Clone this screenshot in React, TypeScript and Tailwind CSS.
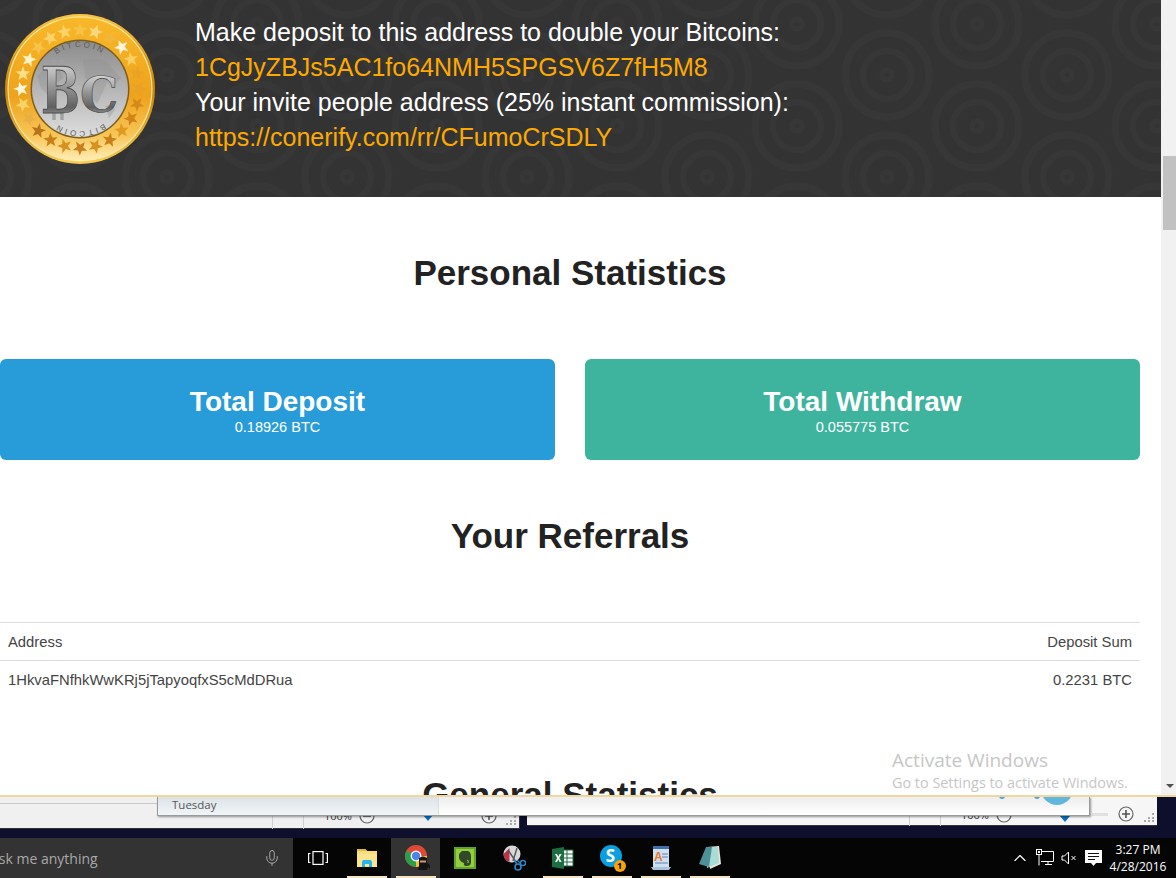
import React from 'react';
import { ChevronUp, Mic } from 'lucide-react';

// star path centred on 0,0
const starPoints = (r: number) => {
  const pts: string[] = [];
  for (let i = 0; i < 10; i++) {
    const rad = i % 2 === 0 ? r : r * 0.42;
    const a = (Math.PI / 5) * i - Math.PI / 2;
    pts.push(`${(Math.cos(a) * rad).toFixed(2)},${(Math.sin(a) * rad).toFixed(2)}`);
  }
  return pts.join(' ');
};

const starColors = [
  '#fbe08a', '#fff3c4', '#f6c24a', '#fbd36a', '#fbd36a', '#f6c24a', '#f9d880', '#f4b63a',
  '#fff6d8', '#f9cf62', '#eaa324', '#e8a026', '#d68a1a', '#d08418', '#e09a22', '#c9801a',
  '#d8921f', '#c9801a', '#d8921f', '#c9801a', '#b8721a', '#e8b040', '#f8d468', '#fff6dc',
];

const Coin = () => {
  const stars = starColors.map((fill, i) => {
    // first star sits just right of the left-most white one, going clockwise
    const a = (i / 24) * Math.PI * 2 + Math.PI + 0.26;
    return { x: 75 + Math.cos(a) * 59, y: 75 + Math.sin(a) * 59, rot: (i * 360) / 24, fill };
  });
  return (
    <svg width="150" height="150" viewBox="0 0 150 150" className="shrink-0">
      <defs>
        <linearGradient id="rim" x1="0" y1="0" x2="0" y2="1">
          <stop offset="0" stopColor="#f9c443" />
          <stop offset="0.5" stopColor="#c98408" />
          <stop offset="1" stopColor="#f9cc55" />
        </linearGradient>
        <linearGradient id="gold" x1="0" y1="0" x2="0" y2="1">
          <stop offset="0" stopColor="#f8b82a" />
          <stop offset="0.55" stopColor="#eea31c" />
          <stop offset="0.82" stopColor="#f7c557" />
          <stop offset="1" stopColor="#ffedb5" />
        </linearGradient>
        <linearGradient id="silver" x1="0" y1="0" x2="0" y2="1">
          <stop offset="0" stopColor="#8b8b8b" />
          <stop offset="0.5" stopColor="#b5b5b5" />
          <stop offset="1" stopColor="#dedede" />
        </linearGradient>
        <linearGradient id="letter" x1="0" y1="0" x2="0" y2="1">
          <stop offset="0" stopColor="#f0f0f0" />
          <stop offset="0.4" stopColor="#a0a0a0" />
          <stop offset="0.72" stopColor="#606060" />
          <stop offset="1" stopColor="#cfcfcf" />
        </linearGradient>
        <path id="arcTop" d="M 33 75 A 42 42 0 0 1 117 75" />
      </defs>
      <circle cx="75" cy="75" r="75" fill="url(#rim)" />
      <circle cx="75" cy="75" r="72.5" fill="#fff0b0" />
      <circle cx="75" cy="75" r="71.5" fill="url(#gold)" />
      {stars.map((s, i) => (
        <polygon key={i} points={starPoints(7.6)} fill={s.fill} transform={`translate(${s.x.toFixed(1)} ${s.y.toFixed(1)}) rotate(${s.rot})`} />
      ))}
      <circle cx="75" cy="75" r="49.5" fill="#7c5f1e" />
      <circle cx="75" cy="75" r="48" fill="url(#silver)" />
      <path d="M32 62q10-10 22-6l4 8-8 6 2 10-8 2-8-8zM78 46q14-4 24 2l14 16-6 6-8-2-4 10-6 12-6-8 2-12-8-6zM100 92l8-2 2 6-6 8z" fill="#8e8e8e" opacity="0.35" />
      <text fill="#5e5e5e" fontFamily="'Liberation Sans', sans-serif" fontSize="8" letterSpacing="2.6">
        <textPath href="#arcTop" startOffset="50%" textAnchor="middle">BITCOIN</textPath>
      </text>
      <text fill="#5e5e5e" fontFamily="'Liberation Sans', sans-serif" fontSize="8" letterSpacing="2.6" transform="rotate(180 75 75)">
        <textPath href="#arcTop" startOffset="50%" textAnchor="middle">BITCOIN</textPath>
      </text>
      <path d="M49 46v10M57 46v10M49 96v10M57 96v10" stroke="#a0a0a0" strokeWidth="3.4" />
      <text x="36" y="71" transform="scale(1 1.4)" fill="url(#letter)" stroke="#4a4a4a" strokeWidth="0.6" fontFamily="'DejaVu Serif', serif" fontWeight="700" fontSize="46">B</text>
      <text x="75" y="98" fill="url(#letter)" stroke="#4a4a4a" strokeWidth="0.6" fontFamily="'DejaVu Serif', serif" fontWeight="700" fontSize="48">C</text>
    </svg>
  );
};

const HeaderPattern = () => {
  const centers = [[167, 75], [-13, 75], [167, -27], [-13, -27], [77, 24], [77, 126]];
  return (
    <svg className="absolute inset-0 w-full h-full">
      <defs>
        <pattern id="rings" patternUnits="userSpaceOnUse" width="180" height="102">
          {centers.map(([cx, cy], i) => (
            <g key={i} fill="none" stroke="#373737">
              <circle cx={cx} cy={cy} r="42" strokeWidth="7" />
              <circle cx={cx} cy={cy} r="24" strokeWidth="6" />
              <circle cx={cx} cy={cy} r="5" strokeWidth="5" />
            </g>
          ))}
        </pattern>
      </defs>
      <rect width="100%" height="100%" fill="url(#rings)" />
    </svg>
  );
};

const StatCard = ({ title, value, color }: { title: string; value: string; color: string }) => (
  <div className={`flex-1 h-[101px] rounded-[6px] text-white flex flex-col items-center pt-[27px] ${color}`}>
    <div className="text-[28px] leading-[32px] font-bold">{title}</div>
    <div className="text-[14.5px] leading-[20px] -mt-[1px]">{value}</div>
  </div>
);

const SectionTitle = ({ children, top }: { children: React.ReactNode; top: string }) => (
  <h2 className={`h-10 leading-10 text-[35px] font-bold text-center text-[#222] ${top}`}>{children}</h2>
);

const TableRow = ({ left, right }: { left: string; right: string }) => (
  <div className="h-[38px] border-t border-[#dddddd] flex items-center justify-between px-2 pt-[1px] text-[14.8px] text-[#444]">
    <span>{left}</span>
    <span>{right}</span>
  </div>
);

const ZoomCircle = ({ plus }: { plus?: boolean }) => (
  <svg width="16" height="16" viewBox="0 0 16 16">
    <circle cx="8" cy="8" r="7" fill="none" stroke="#666" strokeWidth="1.2" />
    <path d={plus ? 'M4 8h8M8 4v8' : 'M4 8h8'} stroke="#555" strokeWidth="1.6" />
  </svg>
);

const Grip = () => (
  <svg width="10" height="10" viewBox="0 0 10 10" className="absolute right-[3px] bottom-[3px]">
    <path d="M8 1h2v2H8zM4 5h2v2H4zM8 5h2v2H8zM0 8h2v2H0zM4 8h2v2H4zM8 8h2v2H8z" fill="#aaa" />
  </svg>
);

const Slot = ({ active, running, children }: { active?: boolean; running?: boolean; children: React.ReactNode }) => (
  <div className={`relative w-[49px] h-full flex items-center justify-center ${active ? 'bg-[#333333]' : ''}`}>
    {children}
    {running && <div className="absolute left-[5px] right-[4px] bottom-0 h-[2px] bg-[#f3e3c3]" />}
  </div>
);

const FolderIcon = () => (
  <svg width="24" height="24" viewBox="0 0 24 24">
    <path d="M2 3h8l2 2h10v16H2z" fill="#f7dc7e" />
    <path d="M2 3h8l2 2H2z" fill="#e3b93e" />
    <path d="M2 8h20v13H2z" fill="#fbe48e" />
    <path d="M7 21v-5l1-2h8l1 2v5h-3v-3h-4v3z" fill="#27b5ee" />
  </svg>
);

const ChromeIcon = () => (
  <svg width="28" height="28" viewBox="0 0 28 28" className="ml-[4px]">
    <circle cx="12" cy="12" r="11" fill="#e04a35" />
    <path d="M12 12 2.5 6.5A11 11 0 0 0 12 23z" fill="#2f9e4a" />
    <path d="M12 12h11a11 11 0 0 1-11 11z" fill="#f7c62f" />
    <circle cx="12" cy="12" r="5.4" fill="#fff" />
    <circle cx="12" cy="12" r="4.2" fill="#4a86e8" />
    <path d="M15 14q4-3 8 0v5l3 2v4l-2-2-1 3H14l1-4z" fill="#141414" />
    <path d="M16 16.5h6v2h-6z" fill="#d89a70" />
  </svg>
);

const EvernoteIcon = () => (
  <svg width="22" height="22" viewBox="0 0 22 22">
    <rect width="22" height="22" fill="#5fa327" />
    <rect x="2" y="2" width="18" height="18" fill="#93cf3c" />
    <path d="M5 7l3-3h6q3 1 3 6v5q0 4-4 4h-2q-2-1-1-3-4-1-5-5V8z" fill="#33472a" />
    <path d="M13 13q2 0 1 3" stroke="#93cf3c" strokeWidth="1" fill="none" />
  </svg>
);

const SnipIcon = () => (
  <svg width="24" height="26" viewBox="0 0 24 26">
    <circle cx="10" cy="9" r="8.5" fill="#d8d8dc" />
    <path d="M1.5 9a8.5 8.5 0 0 0 6 8V3z" fill="#b8344a" />
    <path d="M6 5l8 12M15 3l-4 13" stroke="#555" strokeWidth="1.4" />
    <circle cx="16" cy="22" r="3" fill="none" stroke="#2f86c8" strokeWidth="1.6" />
    <circle cx="21" cy="18" r="2.6" fill="none" stroke="#2f86c8" strokeWidth="1.5" />
    <path d="M12 15l3 4M18 18l-3-3" stroke="#2f86c8" strokeWidth="1.4" />
  </svg>
);

const ExcelIcon = () => (
  <svg width="24" height="24" viewBox="0 0 24 24">
    <path d="M11 4h11v16H11z" fill="#fff" stroke="#1d6f42" strokeWidth="1" />
    <path d="M11 8h11M11 12h11M11 16h11M16 4v16" stroke="#1d6f42" strokeWidth="1" />
    <path d="M1 3l12-2v22L1 21z" fill="#1d6f42" />
    <path d="M4 8l2.2 4L4 16h2l1.3-2.7L8.6 16h2l-2.3-4 2.3-4h-2l-1.3 2.7L6 8z" fill="#fff" />
  </svg>
);

const SkypeIcon = () => (
  <div className="relative w-[24px] h-[24px] -mt-[2px]">
    <div className="w-[22px] h-[22px] rounded-full bg-[#0a9fe0] text-white text-[17px] font-bold leading-[22px] text-center">S</div>
    <div className="absolute -right-[2px] -bottom-[3px] w-[12px] h-[12px] rounded-full bg-[#f7a30c] text-black text-[9px] font-bold leading-[12px] text-center">1</div>
  </div>
);

const WordpadIcon = () => (
  <svg width="20" height="24" viewBox="0 0 20 24">
    <rect x="2" y="0" width="16" height="3" fill="#3f6fa8" />
    <rect x="2" y="3" width="16" height="18" fill="#cfe0f0" />
    <text x="3" y="15" fontSize="12" fontWeight="700" fill="#e8762c" fontFamily="'Liberation Sans', sans-serif">A</text>
    <path d="M11 8h6M11 11h6M4 17h13" stroke="#5a86b8" strokeWidth="1.2" />
    <path d="M0 21h20l-2 3H2z" fill="#a8c4dc" />
  </svg>
);

const NotepadIcon = () => (
  <svg width="22" height="24" viewBox="0 0 22 24">
    <path d="M8 1l12-1 2 18-11 5z" fill="#e8e8dc" />
    <path d="M7 1l12 0 1 16-12 5z" fill="#a8dcd4" />
    <path d="M7 1l6 0 -3 20L0 18z" fill="#4f8f98" />
  </svg>
);

const NetworkIcon = () => (
  <svg width="18" height="18" viewBox="0 0 18 18" fill="none" stroke="#fff" strokeWidth="1">
    <path d="M5 2.5h12.5v10H5M9 15.5h7M12 12.5v3" />
    <rect x="0.5" y="0.5" width="5" height="5" />
    <path d="M3 5.5v11" />
    <rect x="2.5" y="2.5" width="1" height="1" fill="#fff" />
  </svg>
);

const MuteIcon = () => (
  <svg width="16" height="14" viewBox="0 0 16 14" fill="none" stroke="#fff" strokeWidth="1">
    <path d="M1 5h2.5L7.5 1v12L3.5 9H1z" />
    <path d="M10.5 5l4 4M14.5 5l-4 4" />
  </svg>
);

const NotifyIcon = () => (
  <svg width="17" height="17" viewBox="0 0 17 17">
    <path d="M0 0h17v13h-6l-2.5 3L6 13H0z" fill="#fff" />
    <path d="M3 3.5h11M3 6.5h11M3 9.5h7" stroke="#111" strokeWidth="1.2" />
  </svg>
);

export default function App() {
  return (
    <div className="w-[1176px] h-[878px] overflow-hidden flex flex-col font-['Liberation_Sans',Arial,sans-serif]">
      {/* browser window */}
      <div className="relative h-[797px] shrink-0 flex border-b-2 border-[#f0d79f] bg-white overflow-hidden">
        <div className="w-[1161px] shrink-0">
          <header className="relative h-[197px] bg-[#333333] overflow-hidden">
            <HeaderPattern />
            <div className="relative flex pl-[5px] pt-[14px]">
              <Coin />
              <div className="ml-[40px] pt-[1px] text-[25px] leading-[35px] text-white whitespace-nowrap">
                <div>Make deposit to this address to double your Bitcoins:</div>
                <div className="text-[#fdaa00]">1CgJyZBJs5AC1fo64NMH5SPGSV6Z7fH5M8</div>
                <div>Your invite people address (25% instant commission):</div>
                <div className="text-[#fdaa00]">https://conerify.com/rr/CFumoCrSDLY</div>
              </div>
            </div>
          </header>

          <div className="w-[1140px]">
            <SectionTitle top="mt-[56px]">Personal Statistics</SectionTitle>
            <div className="flex gap-[30px] mt-[66px]">
              <StatCard title="Total Deposit" value="0.18926 BTC" color="bg-[#279cd9]" />
              <StatCard title="Total Withdraw" value="0.055775 BTC" color="bg-[#3eb39d]" />
            </div>
            <SectionTitle top="mt-[56px]">Your Referrals</SectionTitle>
            <div className="mt-[66px]">
              <TableRow left="Address" right="Deposit Sum" />
              <TableRow left="1HkvaFNfhkWwKRj5jTapyoqfxS5cMdDRua" right="0.2231 BTC" />
            </div>
            <SectionTitle top="mt-[77px]">General Statistics</SectionTitle>
          </div>
        </div>

        {/* scrollbar */}
        <div className="relative flex-1 bg-[#f1f1f1]">
          <div className="absolute left-[2px] right-0 top-[156px] h-[74px] bg-[#c1c1c1]" />
          <div className="absolute left-[5px] top-[784px] w-0 h-0 border-x-[4px] border-x-transparent border-t-[4px] border-t-[#505050]" />
        </div>

        {/* activation watermark */}
        <div className="absolute left-[892px] top-[748px] text-[#c6c6c6] font-['Open_Sans',sans-serif]">
          <div className="text-[19px] leading-[24px]">Activate Windows</div>
          <div className="text-[14.4px] leading-[22px]">Go to Settings to activate Windows.</div>
        </div>
      </div>

      {/* what shows of the desktop below the browser */}
      <div className="relative h-[41px] shrink-0 bg-[#0d0f2c] overflow-hidden font-['Open_Sans',sans-serif]">
        <div className="absolute left-0 top-0 w-[520px] h-[32px] bg-[#f0f0f0] border-b border-r border-[#333]">
          <div className="absolute left-0 top-[6px] w-[157px] h-px bg-[#c8c8c8]" />
          <div className="absolute left-[272px] top-[16px] w-px h-[16px] bg-[#d0d0d0]" />
          <div className="absolute left-[303px] top-[16px] w-px h-[16px] bg-[#d0d0d0]" />
          <div className="absolute left-[324px] top-[11px] text-[11px] leading-[16px] text-[#333]">100%</div>
          <div className="absolute left-[359px] top-[11px]"><ZoomCircle /></div>
          <div className="absolute left-[481px] top-[11px]"><ZoomCircle plus /></div>
          <div className="absolute left-[423px] top-[18px] w-0 h-0 border-x-[5px] border-x-transparent border-t-[6px] border-t-[#0a6fc2]" />
          <Grip />
        </div>
        <div className="absolute left-[527px] top-0 w-[630px] h-[29px] bg-[#f6f6f6] border-b border-[#333]">
          <div className="absolute left-[382px] top-[16px] w-px h-[13px] bg-[#d0d0d0]" />
          <div className="absolute left-[413px] top-[16px] w-px h-[13px] bg-[#d0d0d0]" />
          <div className="absolute left-[434px] top-[10px] text-[11px] leading-[16px] text-[#333]">100%</div>
          <div className="absolute left-[469px] top-[10px]"><ZoomCircle /></div>
          <div className="absolute left-[591px] top-[9px]"><ZoomCircle plus /></div>
          <div className="absolute left-[533px] top-[19px] w-0 h-0 border-x-[5px] border-x-transparent border-t-[6px] border-t-[#0a6fc2]" />
          <div className="absolute left-[565px] top-[16px] w-[16px] h-[3px] bg-[#e0e0e0]" />
          <Grip />
        </div>
        <div className="absolute left-[157px] top-0 w-[933px] h-[19px] flex border-b border-r border-l border-[#9a9a9a] shadow-[1px_1px_2px_rgba(0,0,0,0.4)]">
          <div className="w-[281px] h-full bg-gradient-to-b from-[#dce3e8] to-[#f1f5f7] border-r border-[#dddddd] pl-[14px] text-[11.5px] leading-[15px] text-[#555]">Tuesday</div>
          <div className="relative flex-1 h-full bg-gradient-to-b from-[#eeeeee] to-[#ffffff]">
            <div className="absolute left-[595px] -top-[1px] w-[6px] h-[3px] rounded-b-full bg-[#4aa8d8]" />
            <div className="absolute left-[560px] -top-[1px] w-[6px] h-[3px] rounded-b-full bg-[#4aa8d8]" />
            <div className="absolute left-[602px] -top-[24px] w-[32px] h-[32px] rounded-full bg-[#62b6dc]" />
          </div>
        </div>
      </div>

      {/* taskbar */}
      <div className="h-[40px] flex-1 bg-[#050506] flex items-stretch font-['Open_Sans',sans-serif] text-white">
        <div className="relative w-[293px] shrink-0 bg-[#333333] overflow-hidden flex items-center justify-between pr-[12px]">
          <span className="-ml-[10px] text-[14px] text-[#a8a8a8] whitespace-nowrap">Ask me anything</span>
          <Mic size={18} strokeWidth={1.2} className="text-[#b0b0b0]" />
        </div>
        <Slot>
          <svg width="20" height="14" viewBox="0 0 20 14" fill="none" stroke="#fff" strokeWidth="1.2">
            <rect x="5" y="0.6" width="10" height="12.8" />
            <path d="M2.5 2.5H0.6v9h1.9M17.5 2.5h1.9v9h-1.9" />
          </svg>
        </Slot>
        <Slot running><FolderIcon /></Slot>
        <Slot active running><ChromeIcon /></Slot>
        <Slot><EvernoteIcon /></Slot>
        <Slot><SnipIcon /></Slot>
        <Slot running><ExcelIcon /></Slot>
        <Slot running><SkypeIcon /></Slot>
        <Slot running><WordpadIcon /></Slot>
        <Slot running><NotepadIcon /></Slot>
        <div className="flex-1 flex items-center justify-end">
          <ChevronUp size={20} strokeWidth={1.4} className="mr-[6px]" />
          <div className="mr-[7px]"><NetworkIcon /></div>
          <div className="mr-[8px]"><MuteIcon /></div>
          <div className="mr-[3px]"><NotifyIcon /></div>
          <div className="w-[66px] mr-[5px] text-[12px] leading-[17px] text-center">
            <div>3:27 PM</div>
            <div>4/28/2016</div>
          </div>
        </div>
      </div>
    </div>
  );
}
